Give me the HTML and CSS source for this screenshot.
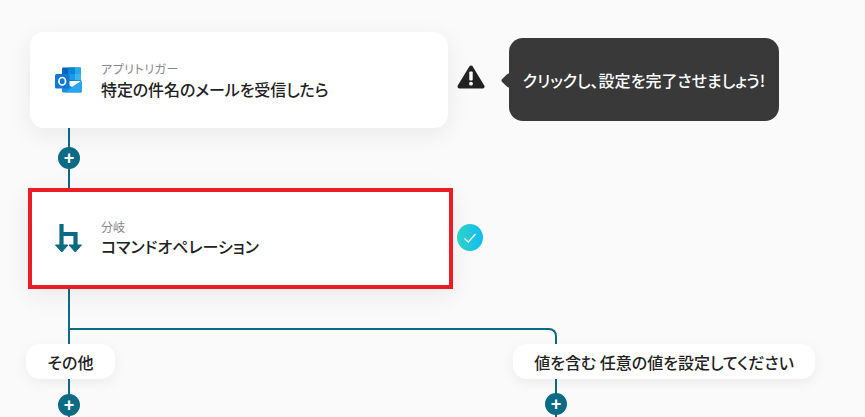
FILE: index.html
```html
<!DOCTYPE html>
<html lang="ja">
<head>
    <meta charset="UTF-8">
    <meta name="viewport" content="width=device-width, initial-scale=1.0">
    <title>フロー</title>
    <link rel="stylesheet" href="styles.css">
</head>
<body>
    <div class="canvas">
        <!-- connector lines -->
        <div class="line line-main"></div>
        <div class="line-branch"></div>
        <div class="line line-right"></div>

        <div class="node node-trigger">
            <svg class="node-icon" width="28" height="28" viewBox="0 0 28 28">
                <path d="M8 2.500a1 1 0 0 1 1-1h17a1 1 0 0 1 1 1V15H8z" fill="#0364b8"/>
                <rect x="14" y="1.500" width="7" height="6.500" fill="#0a84d8"/>
                <path d="M21 1.500h5a1 1 0 0 1 1 1V8h-6z" fill="#28a8ea"/>
                <rect x="8" y="8" width="6" height="6.500" fill="#0078d4"/>
                <rect x="14" y="8" width="7" height="6.500" fill="#1e97e4"/>
                <rect x="21" y="8" width="6" height="6.500" fill="#35b8f0"/>
                <path d="M8 15l10 6 10-6.500V25a1.500 1.500 0 0 1-1.500 1.500h-17A1.500 1.500 0 0 1 8 25z" fill="#1490df"/>
                <path d="M28 14.500V25a1.500 1.500 0 0 1-1.500 1.500H11z" fill="#28a8ea"/>
                <rect x="1" y="8" width="14.500" height="14.500" rx="1.500" fill="#0f78d4"/>
                <ellipse cx="8.200" cy="15.200" rx="3.300" ry="3.700" fill="none" stroke="#fff" stroke-width="1.700"/>
            </svg>
            <div class="node-text">
                <span class="node-label">アプリトリガー</span>
                <span class="node-title">特定の件名のメールを受信したら</span>
            </div>
        </div>

        <svg class="warn" width="28" height="24" viewBox="0 0 28 24">
            <path d="M14 2.500L25.500 21.500H2.500z" fill="#222" stroke="#222" stroke-width="4" stroke-linejoin="round"/>
            <rect x="12.300" y="6.500" width="3.400" height="9" rx="1" fill="#fff"/>
            <circle cx="14" cy="18.700" r="1.900" fill="#fff"/>
        </svg>
        <div class="tooltip">クリックし、設定を完了させましょう!</div>

        <button class="add add-1" type="button">+</button>

        <div class="node node-branch">
            <svg class="node-icon" width="28" height="30" viewBox="0 0 28 30">
                <path d="M7.500 1v23M7.500 11h14v13" fill="none" stroke="#0b6b84" stroke-width="4.200"/>
                <path d="M1.500 22h12.500L7.800 29zM15 22h12.500L21.300 29z" fill="#0b6b84" stroke="#0b6b84" stroke-linejoin="round"/>
            </svg>
            <div class="node-text">
                <span class="node-label">分岐</span>
                <span class="node-title">コマンドオペレーション</span>
            </div>
        </div>

        <div class="check">
            <svg width="14" height="12" viewBox="0 0 14 12"><path d="M1.500 6.500l3.800 3.500 7.200-8" fill="none" stroke="#fff" stroke-width="1.300"/></svg>
        </div>

        <div class="pill pill-other">その他</div>
        <div class="pill pill-value">値を含む 任意の値を設定してください</div>

        <button class="add add-2" type="button">+</button>
        <button class="add add-3" type="button">+</button>
    </div>
</body>
</html>
```

FILE: styles.css
```css
body {
    margin: 0;
    background-color: #fafafa;
    font-family: "Noto Sans CJK JP", "Noto Sans", sans-serif;
    font-feature-settings: "palt";
    color: #222;
    overflow: hidden;
}
.canvas {
    position: relative;
    width: 865px;
    height: 417px;
    overflow: hidden;
}
.line {
    position: absolute;
    width: 2px;
    background-color: #0b6b84;
}
.line-main {
    left: 68px;
    top: 128px;
    height: 289px;
}
.line-right {
    left: 555px;
    top: 370px;
    height: 47px;
}
.line-branch {
    position: absolute;
    left: 68px;
    top: 328px;
    width: 487px;
    height: 30px;
    border-top: 2px solid #0b6b84;
    border-right: 2px solid #0b6b84;
    border-top-right-radius: 8px;
}
.node {
    position: absolute;
    display: flex;
    align-items: center;
    gap: 19px;
    box-sizing: border-box;
    padding-left: 24px;
    background: white;
    box-shadow: 0 6px 24px rgba(0, 0, 0, 0.07);
}
.node-trigger {
    left: 30px;
    top: 32px;
    width: 418px;
    height: 96px;
    border-radius: 14px;
}
.node-trigger .node-label {
    letter-spacing: 0.5px;
}
.node-trigger .node-title {
    margin-top: 1px;
    letter-spacing: -0.1px;
}
.node-branch {
    left: 28px;
    top: 188px;
    width: 425px;
    height: 101px;
    padding-left: 22px;
    padding-bottom: 2px;
    border: 4px solid #ec1c24;
}
.node-icon {
    flex-shrink: 0;
}
.node-text {
    display: flex;
    flex-direction: column;
    gap: 0;
}
.node-label {
    font-size: 12px;
    line-height: 17px;
    color: #888;
}
.node-title {
    font-size: 16px;
    line-height: 23px;
    font-weight: 500;
}
.warn {
    position: absolute;
    left: 457px;
    top: 65px;
}
.tooltip {
    position: absolute;
    left: 509px;
    top: 38px;
    display: flex;
    align-items: center;
    justify-content: center;
    width: 270px;
    height: 83px;
    border-radius: 14px;
    background-color: #393939;
    color: white;
    font-size: 16px;
    font-weight: 500;
}
.tooltip::before {
    content: "";
    position: absolute;
    left: -6px;
    top: 37px;
    width: 11px;
    height: 11px;
    background-color: #393939;
    transform: rotate(45deg);
    border-radius: 2px;
}
.add {
    position: absolute;
    width: 22px;
    height: 22px;
    padding: 0;
    border: none;
    border-radius: 50%;
    background-color: #0b6b84;
    color: white;
    font-family: "Liberation Sans", sans-serif;
    font-size: 18px;
    font-weight: bold;
    line-height: 22px;
    text-align: center;
}
.add-1 { left: 58px; top: 147px; }
.add-2 { left: 58px; top: 394px; }
.add-3 { left: 545px; top: 393px; }
.check {
    position: absolute;
    left: 457px;
    top: 224px;
    display: flex;
    align-items: center;
    justify-content: center;
    width: 26px;
    height: 27px;
    border-radius: 50%;
    background: linear-gradient(90deg, #2ed3c6, #12bcf0);
}
.pill {
    position: absolute;
    top: 344px;
    display: flex;
    align-items: center;
    justify-content: center;
    box-sizing: border-box;
    height: 35px;
    border-radius: 14px;
    background: white;
    box-shadow: 0 4px 14px rgba(0, 0, 0, 0.06);
    font-size: 16px;
    font-weight: 500;
}
.pill-other {
    left: 26px;
    width: 89px;
}
.pill-value {
    left: 513px;
    width: 302px;
}
```
